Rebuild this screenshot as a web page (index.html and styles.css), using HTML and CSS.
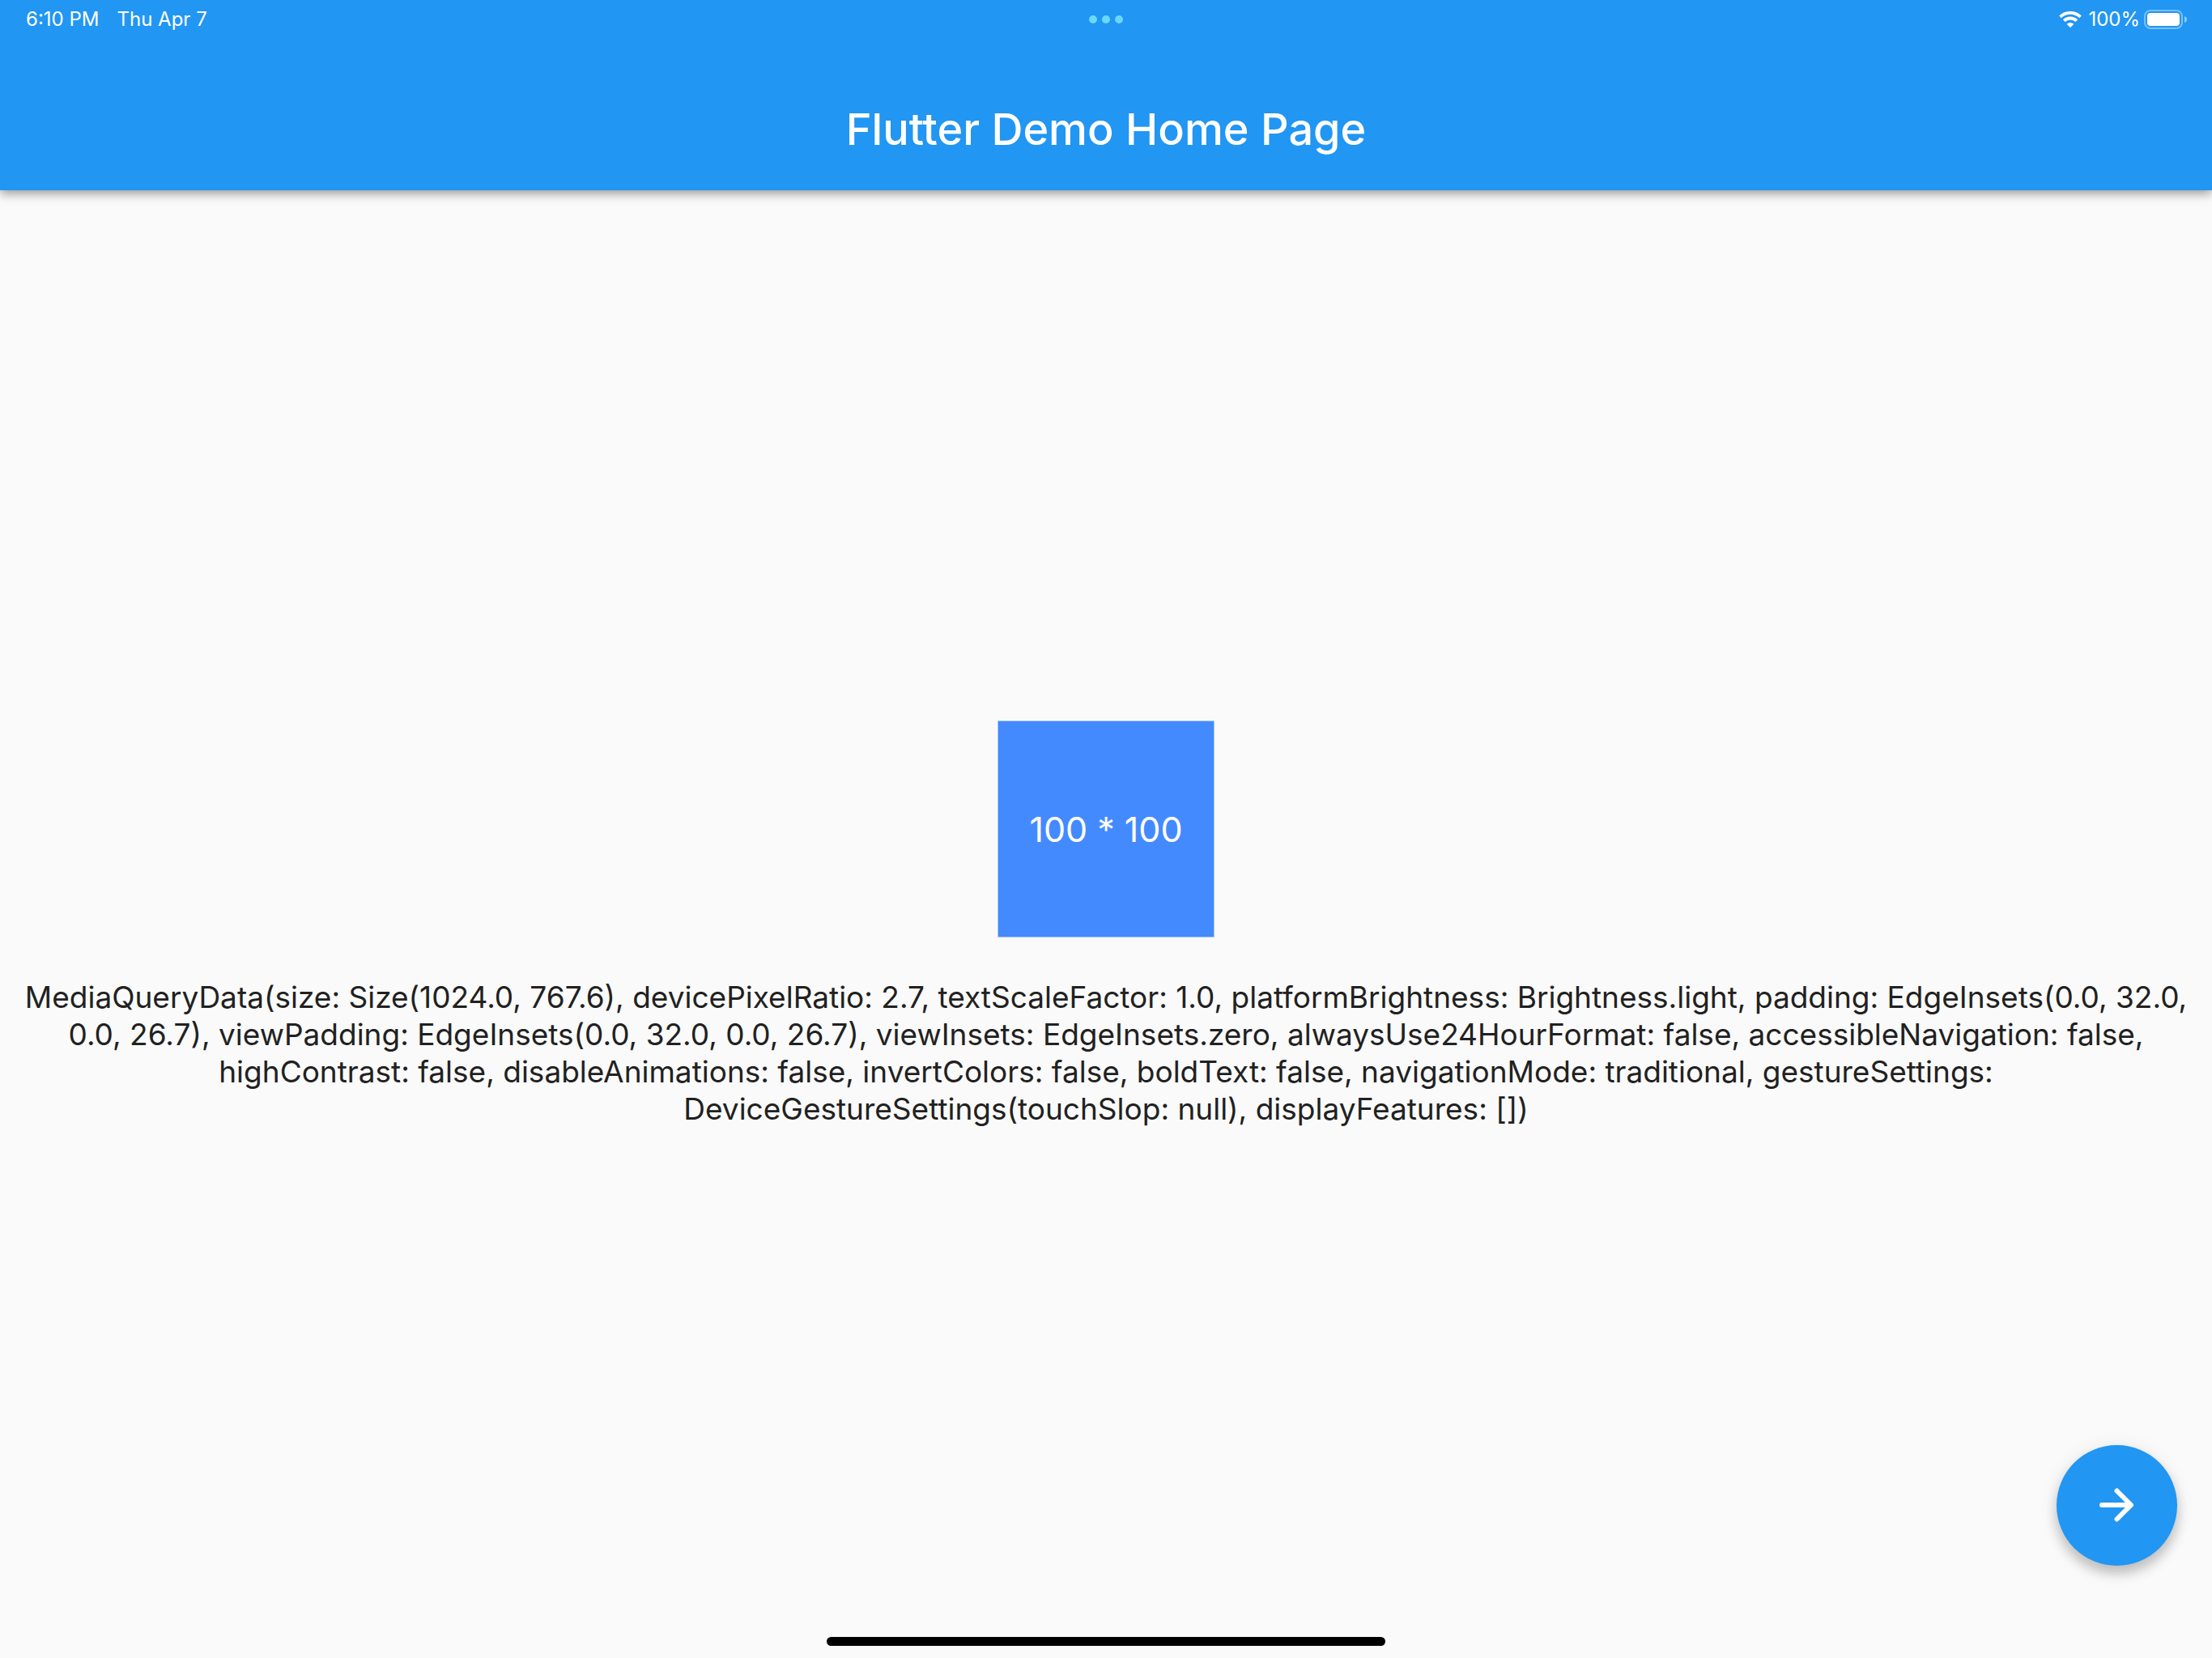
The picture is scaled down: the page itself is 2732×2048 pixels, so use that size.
FILE: index.html
```html
<!DOCTYPE html>
<html lang="en">
<head>
<meta charset="utf-8">
<meta name="viewport" content="width=device-width, initial-scale=1">
<title>Flutter Demo Home Page</title>
<link rel="stylesheet" href="styles.css">
</head>
<body class="app">
<header class="app-bar">
  <div class="status-bar">
    <div class="status-left"><span>6:10 PM</span><span>Thu Apr 7</span></div>
    <div class="multitask"><i class="dot"></i><i class="dot"></i><i class="dot"></i></div>
    <div class="status-right">
      <svg class="wifi" viewBox="0 0 28 20" aria-hidden="true">
        <g fill="none" stroke="#fff" stroke-width="3.8">
          <path d="M1.5 6.9A18 18 0 0 1 26.5 6.9"/>
          <path d="M6.2 11.6A11.3 11.3 0 0 1 21.8 11.6"/>
        </g>
        <path fill="#fff" d="M9.6 15.8A6.4 6.4 0 0 1 18.4 15.8L14.7 19.6Q14 20.2 13.3 19.6Z"/>
      </svg>
      <span class="percent">100%</span>
      <svg class="battery" viewBox="0 0 54 24" aria-hidden="true">
        <rect x="1" y="1" width="46" height="22" rx="7" fill="none" stroke="#fff" stroke-opacity=".4" stroke-width="2"/>
        <rect x="4" y="4" width="40" height="16" rx="4" fill="#fff"/>
        <path d="M50 8Q53 9 53 12Q53 15 50 16Z" fill="#fff" fill-opacity=".5"/>
      </svg>
    </div>
  </div>
  <h1 class="title">Flutter Demo Home Page</h1>
</header>
<main class="content">
  <div class="square">100 * 100</div>
  <p class="details">MediaQueryData(size: Size(1024.0, 767.6), devicePixelRatio: 2.7, textScaleFactor: 1.0, platformBrightness: Brightness.light, padding: EdgeInsets(0.0, 32.0, 0.0, 26.7), viewPadding: EdgeInsets(0.0, 32.0, 0.0, 26.7), viewInsets: EdgeInsets.zero, alwaysUse24HourFormat: false, accessibleNavigation: false, highContrast: false, disableAnimations: false, invertColors: false, boldText: false, navigationMode: traditional, gestureSettings: DeviceGestureSettings(touchSlop: null), displayFeatures: [])</p>
</main>
<button class="fab" type="button" aria-label="Next">
  <svg class="fab-icon" viewBox="0 0 64 64" aria-hidden="true"><path d="M13 31H48M31.500 13.500L49 31L31.500 48.500" fill="none" stroke="#fff" stroke-width="6" stroke-linecap="round" stroke-linejoin="round"/></svg>
</button>
<div class="home-indicator"></div>
</body>
</html>
```
FILE: styles.css
```css
* { box-sizing: border-box; }

.app {
  margin: 0;
  min-height: 100vh;
  display: flex;
  flex-direction: column;
  background: #fafafa;
  color: #212121;
  font-family: Inter, "Liberation Sans", sans-serif;
}

.app-bar {
  background: #2196f3;
  color: #fff;
  box-shadow: 0 4px 12px rgba(0, 0, 0, .4);
}

.status-bar {
  display: grid;
  grid-template-columns: 1fr auto 1fr;
  align-items: center;
  height: 48px;
  padding: 0 30px;
  font-size: 24px;
  line-height: 32px;
}

.status-left { display: flex; gap: 22px; padding-left: 2px; }
.multitask { display: flex; gap: 6px; }

.dot {
  width: 10px;
  height: 10px;
  border-radius: 50%;
  background: #6ad9ff;
}

.status-right {
  display: flex;
  justify-content: flex-end;
  align-items: center;
}

.wifi { width: 28px; height: 20px; margin-right: 8px; }
.battery { width: 54px; height: 24px; margin-left: 5px; }

.title {
  margin: 0;
  padding: 80px 32px 43px;
  text-align: center;
  font-size: 54px;
  line-height: 64px;
  font-weight: 500;
}

.content {
  flex: 1;
  display: flex;
  flex-direction: column;
  align-items: center;
  justify-content: center;
  gap: 51px;
}

.square {
  display: flex;
  align-items: center;
  justify-content: center;
  width: 268px;
  height: 268px;
  border: 1px solid #a9cafd;
  background: #448aff;
  color: #fff;
  font-size: 43px;
  /* keeps the asterisk raised between digits */
  font-feature-settings: "calt" 0;
}

.details {
  margin: 0;
  text-align: center;
  font-size: 37px;
  line-height: 46px;
}

.fab {
  position: fixed;
  right: 43px;
  bottom: 114px;
  display: flex;
  align-items: center;
  justify-content: center;
  width: 149px;
  height: 149px;
  padding: 0;
  border: 0;
  border-radius: 50%;
  background: #2196f3;
  box-shadow: 0 10px 16px rgba(0, 0, 0, .22), 0 2px 24px rgba(0, 0, 0, .08);
}

.fab-icon { width: 64px; height: 64px; }

.home-indicator {
  position: fixed;
  bottom: 15px;
  left: 50%;
  width: 690px;
  height: 11px;
  margin-left: -345px;
  border-radius: 6px;
  background: #000;
}
```
